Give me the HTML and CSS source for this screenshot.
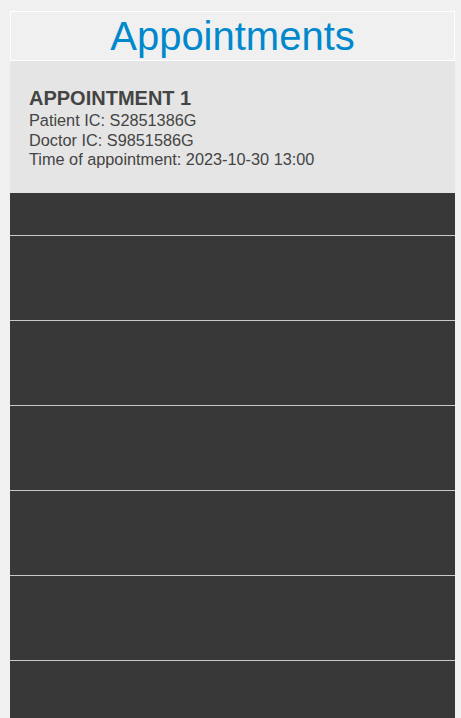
FILE: index.html
```html
<!DOCTYPE html>
<html>
<head>
<meta charset="utf-8">
<link rel="stylesheet" href="styles.css">
</head>
<body>
<div class="page">
  <header class="title-box">
    <h1 class="title">Appointments</h1>
  </header>
  <section class="card">
    <h2 class="card-title">APPOINTMENT 1</h2>
    <p class="line">Patient IC: S2851386G</p>
    <p class="line">Doctor IC: S9851586G</p>
    <p class="line">Time of appointment: 2023-10-30 13:00</p>
  </section>
  <div class="list">
    <div class="row first"></div>
    <div class="row"></div>
    <div class="row"></div>
    <div class="row"></div>
    <div class="row"></div>
    <div class="row"></div>
    <div class="row"></div>
  </div>
</div>
</body>
</html>
```

FILE: styles.css
```css
html, body {
  margin: 0;
  padding: 0;
  background: #f0f0f0;
  overflow: hidden;
}
body {
  font-family: "Liberation Sans", Arial, sans-serif;
  height: 718px;
}
.page {
  width: 445px;
  margin-left: 10px;
  padding-top: 11px;
}
.title-box {
  border: 1px solid #ffffff;
  height: 48px;
  display: flex;
  align-items: center;
  justify-content: center;
}
.title {
  margin: 0;
  font-weight: normal;
  font-size: 40px;
  line-height: 48px;
  color: #0088cc;
}
.card {
  background: #e5e5e5;
  height: 132px;
  box-sizing: border-box;
  padding: 25px 19px 0 19px;
  color: #444444;
}
.card-title {
  margin: 0 0 1px 0;
  font-size: 20px;
  line-height: 24px;
  font-weight: bold;
}
.line {
  margin: 0;
  font-size: 16.3px;
  line-height: 19.5px;
}
.list {
  background: #383838;
}
.row {
  height: 84px;
  border-top: 1px solid #c8c8c8;
}
.row.first {
  height: 42px;
  border-top: none;
}
```
